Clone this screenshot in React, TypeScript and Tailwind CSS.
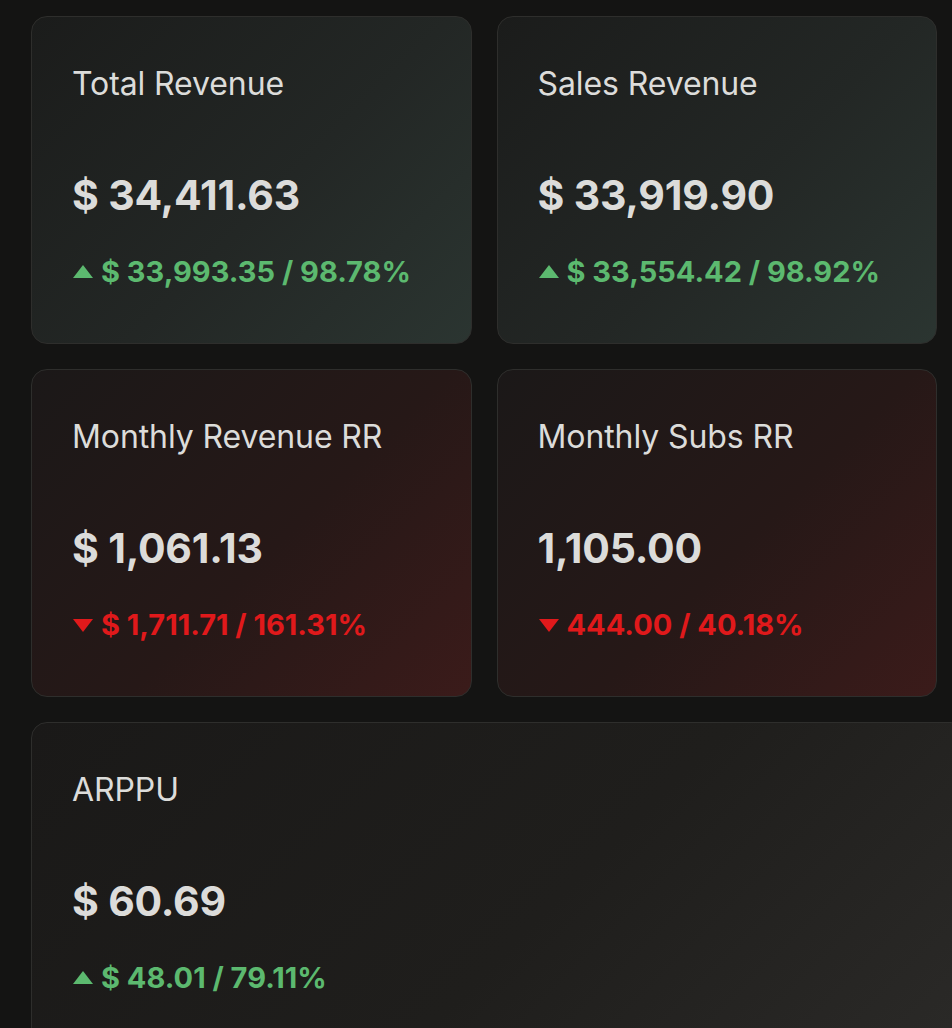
import React from "react";

type Card = { title: string; value: string; delta: string; up: boolean; tone: "green" | "red" | "gray" };

const Tri = ({ up }: { up: boolean }) => (
  <svg width="22" height="18" viewBox="0 0 22 18" className="mr-[7px] shrink-0">
    {up ? <polygon points="11,2 21,15 1,15" fill="#5cb96f" /> : <polygon points="1,3 21,3 11,16" fill="#e0191b" />}
  </svg>
);

const CardView = ({ c, wide }: { c: Card; wide?: boolean }) => {
  const bg =
    c.tone === "green"
      ? "bg-[linear-gradient(135deg,#1b1c1b_0%,#232725_55%,#2b3531_100%)]"
      : c.tone === "red"
      ? "bg-[linear-gradient(135deg,#1b1818_0%,#261817_55%,#3b1b1a_100%)]"
      : "bg-[linear-gradient(135deg,#1a1918_0%,#1f1e1c_55%,#2b2a28_100%)]";
  return (
    <div
      className={`${bg} border border-[#2e2e2c] rounded-[16px] pl-[40px] pt-[48px] ${
        wide ? "col-span-2 mr-[-30px] h-[340px]" : "h-[328px]"
      }`}
    >
      <div className="text-[32px] leading-[38px] text-[#dcdcda] tracking-[-0.1px]">{c.title}</div>
      <div className="mt-[68px] text-[41px] leading-[48px] font-bold text-[#dcdcda] tracking-[-0.2px]">{c.value}</div>
      <div
        className={`mt-[36px] flex items-center text-[29px] leading-[34px] font-bold ${
          c.up ? "text-[#5cb96f]" : "text-[#e0191b]"
        }`}
      >
        <Tri up={c.up} />
        {c.delta}
      </div>
    </div>
  );
};

export default function App() {
  const cards: Card[] = [
    { title: "Total Revenue", value: "$ 34,411.63", delta: "$ 33,993.35 / 98.78%", up: true, tone: "green" },
    { title: "Sales Revenue", value: "$ 33,919.90", delta: "$ 33,554.42 / 98.92%", up: true, tone: "green" },
    { title: "Monthly Revenue RR", value: "$ 1,061.13", delta: "$ 1,711.71 / 161.31%", up: false, tone: "red" },
    { title: "Monthly Subs RR", value: "1,105.00", delta: "444.00 / 40.18%", up: false, tone: "red" },
  ];
  return (
    <div
      className="w-[952px] h-[1028px] overflow-hidden bg-[#141413] pl-[31px] pr-[15px] pt-[16px]"
      style={{ fontFamily: "Inter, 'Noto Sans', sans-serif" }}
    >
      <div className="grid grid-cols-2 gap-x-[25px] gap-y-[25px]">
        {cards.map((c) => (
          <CardView key={c.title} c={c} />
        ))}
        <CardView wide c={{ title: "ARPPU", value: "$ 60.69", delta: "$ 48.01 / 79.11%", up: true, tone: "gray" }} />
      </div>
    </div>
  );
}
